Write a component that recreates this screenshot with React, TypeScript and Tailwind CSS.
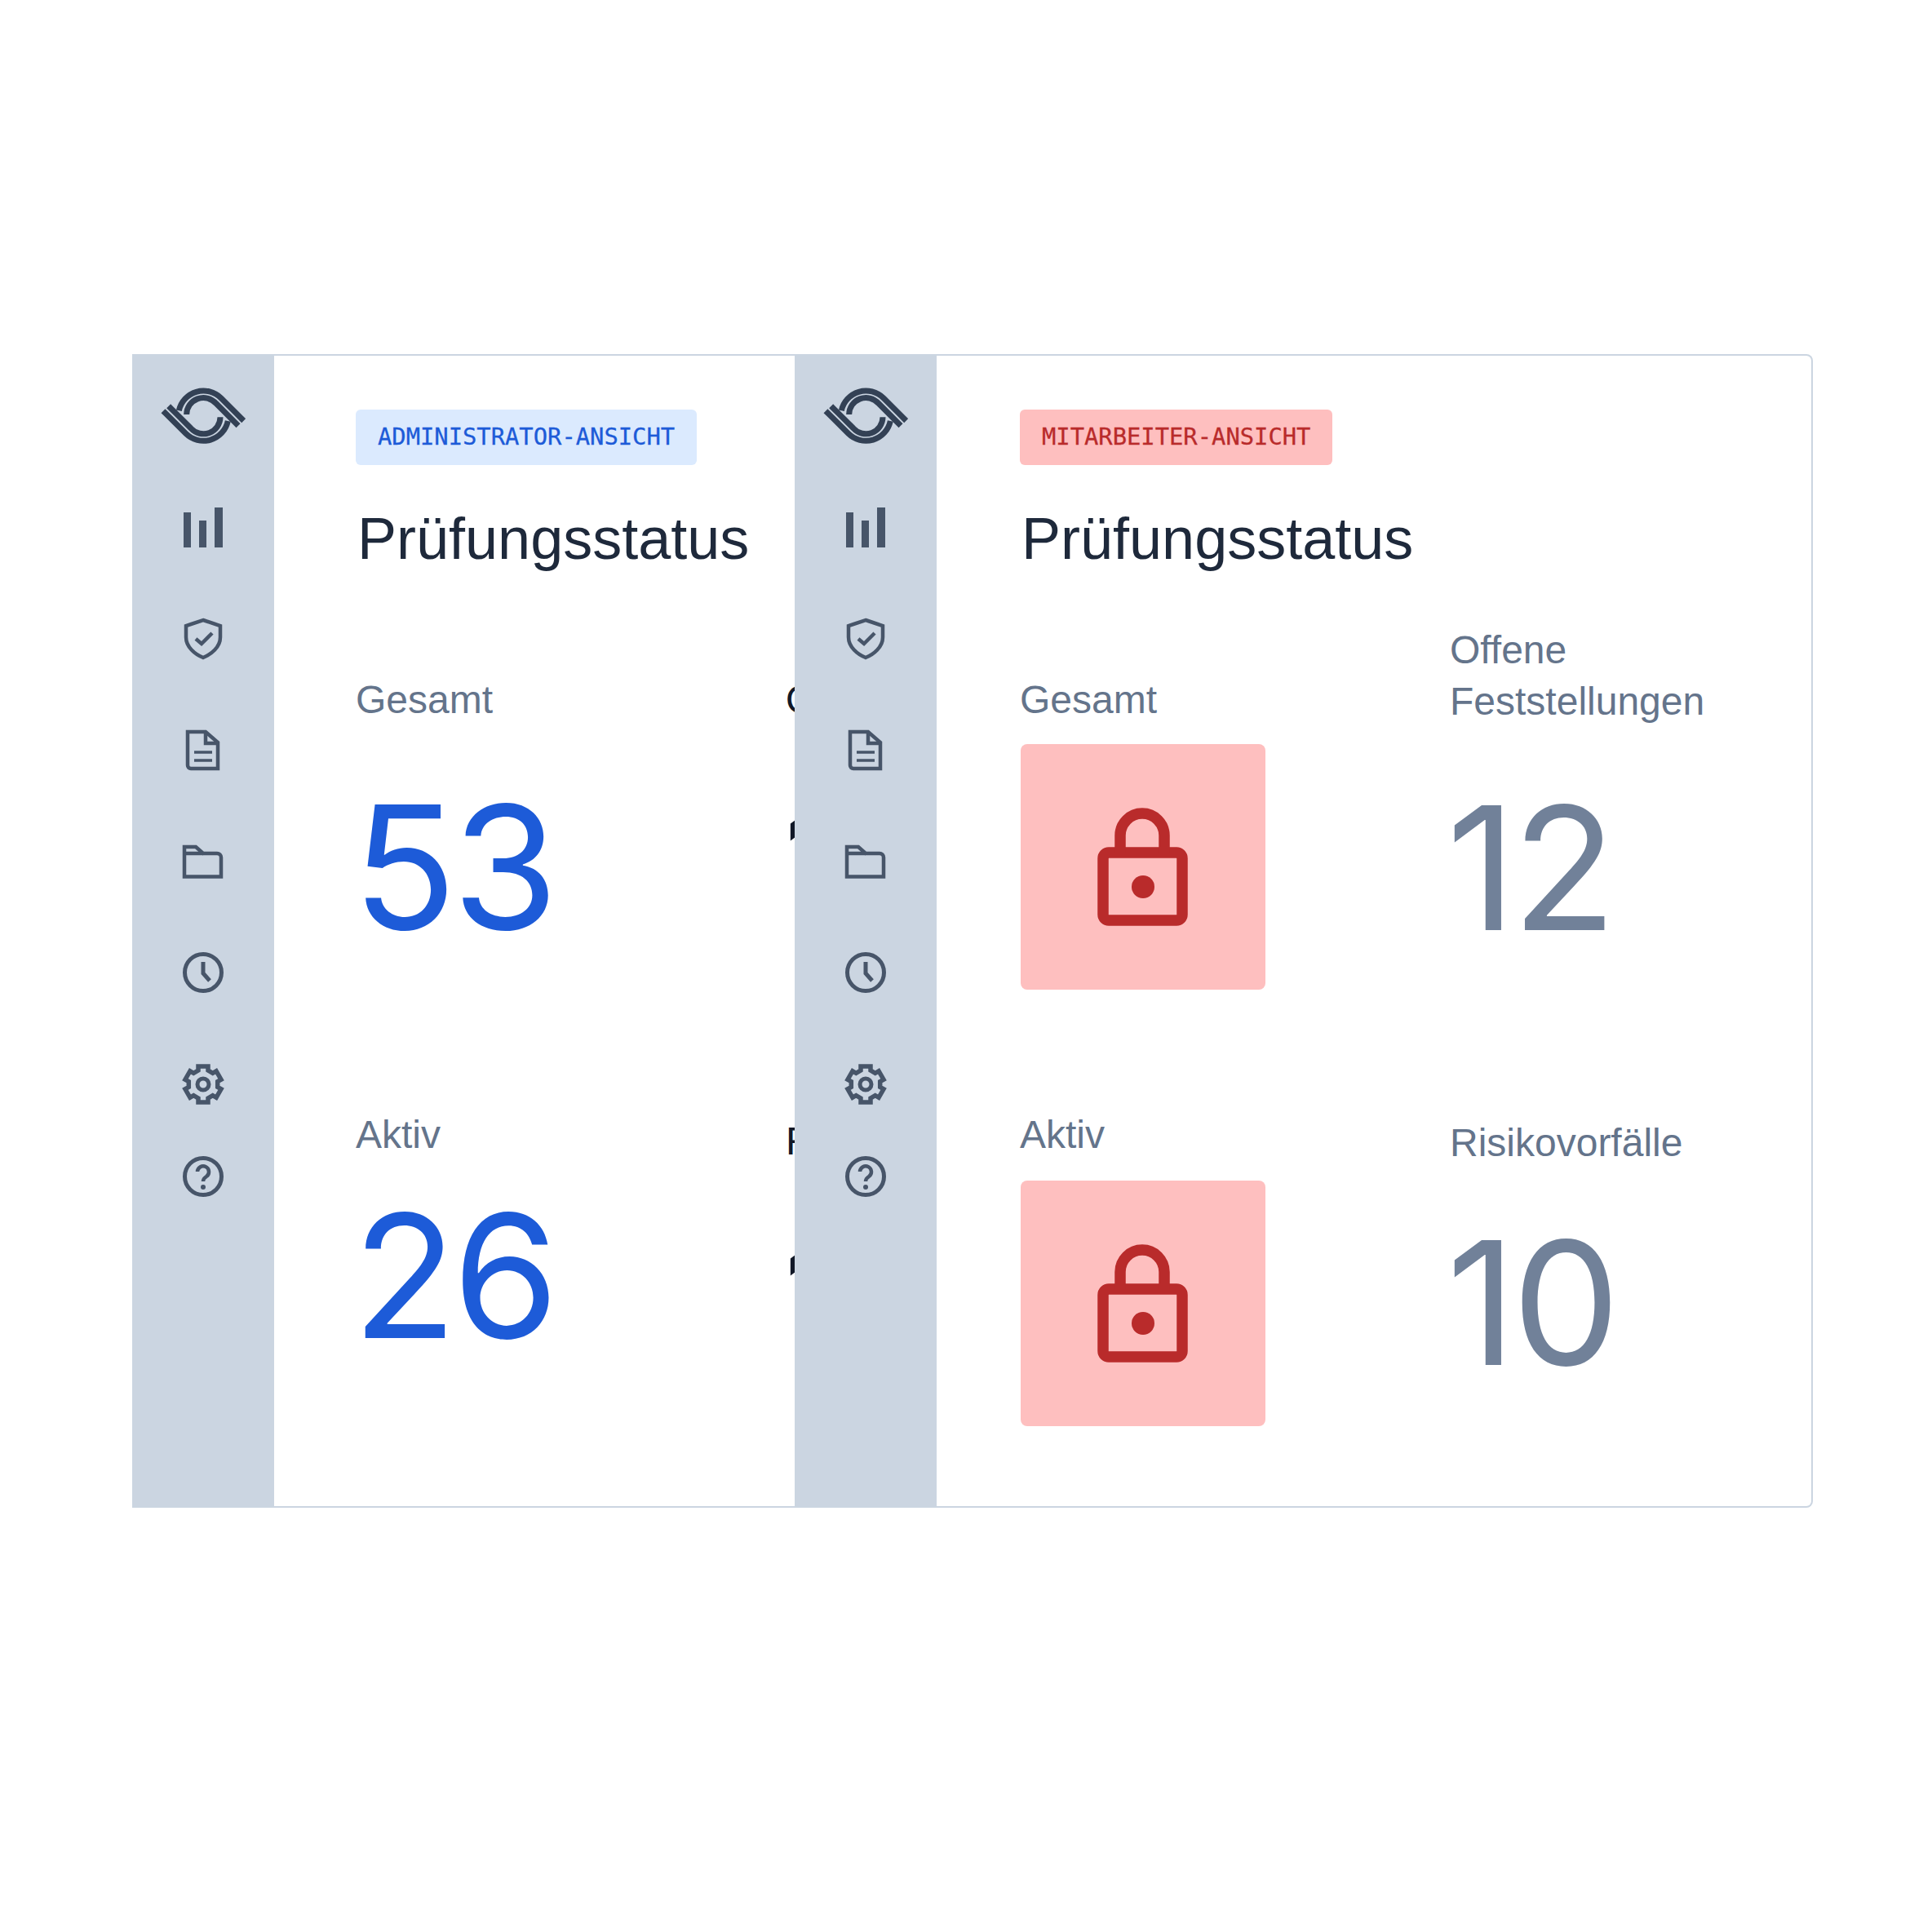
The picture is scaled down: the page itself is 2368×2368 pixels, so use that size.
const sans = "font-['Liberation_Sans',Arial,sans-serif]";

const gearPoints =
  "24,8 36,8 36,13 41.7,16.3 46.05,13.8 52.05,24.2 47.7,26.7 47.7,33.3 52.05,35.8 46.05,46.2 41.7,43.7 36,47 36,52 24,52 24,47 18.3,43.7 13.95,46.2 7.95,35.8 12.3,33.3 12.3,26.7 7.95,24.2 13.95,13.8 18.3,16.3 24,13";

function Logo() {
  return (
    <svg width="104" height="69" viewBox="0 0 312 207" fill="none" stroke="#334155" strokeWidth="21">
      <path d="M67 85A92 92 0 0 1 222 39L305 122" />
      <path d="M95 99A62 62 0 0 1 203 58L285 140" />
      <path d="M247 123A92 92 0 0 1 92 169L9 86" />
      <path d="M219 109A62 62 0 0 1 111 150L29 68" />
    </svg>
  );
}

function NavIcon({ children, className = "" }: { children: React.ReactNode; className?: string }) {
  return (
    <svg className={className} width="60" height="60" viewBox="0 0 60 60" fill="none" stroke="#475569" strokeWidth="4.5">
      {children}
    </svg>
  );
}

function Sidebar() {
  return (
    <div className="w-[174px] shrink-0 bg-[#cbd5e1] flex flex-col items-center pt-[41px]">
      <Logo />
      <div className="flex flex-col items-center gap-[76px] mt-[73px]">
        <NavIcon>
          <path fill="#475569" stroke="none" d="M6 11H15V54H6ZM25 21H34V54H25ZM44 5H54V54H44Z" />
        </NavIcon>
        <NavIcon>
          <path d="M30 7L51 14V28C51 40 40 49 30 53C20 49 9 40 9 28V14Z" />
          <path d="M21 30L28 36L41 23" />
        </NavIcon>
        <NavIcon className="mt-px">
          <path d="M11 7H33L48 20V52H15A4 4 0 0 1 11 48Z" />
          <path d="M33 7V21H48" />
          <path strokeWidth="3.5" d="M19 32H41M19 42H41" />
        </NavIcon>
        <NavIcon className="mt-px">
          <path d="M7 11H21L30 19H47A5 5 0 0 1 52 24V47.5H7Z" />
          <path d="M7 19H30" />
        </NavIcon>
        <NavIcon className="-mt-px">
          <circle cx="30" cy="30" r="22.5" strokeWidth="5" />
          <path strokeWidth="5" d="M30 17V31L38 40" />
        </NavIcon>
        <NavIcon className="mt-px">
          <polygon strokeWidth="5.5" points={gearPoints} />
          <circle cx="30" cy="30" r="7" strokeWidth="5" />
        </NavIcon>
        <div className="-mt-[23px]">
          <NavIcon>
            <circle cx="30" cy="30" r="22.5" strokeWidth="5" />
            <path d="M23 24A7 7 0 1 1 34 30C31 32 30 33 30 36" />
            <circle cx="30" cy="43" r="3" fill="#475569" stroke="none" />
          </NavIcon>
        </div>
      </div>
    </div>
  );
}

function LockTile() {
  return (
    <div className="w-[300px] h-[301px] ml-px rounded-lg bg-[#febfbf] flex items-center justify-center">
      <svg width="180" height="180" viewBox="0 0 180 180" fill="none" stroke="#b92b2b" strokeWidth="13.5">
        <rect x="41" y="72" width="97" height="83" rx="7" />
        <path d="M62 72V51A27 27 0 0 1 116 51V72" />
        <circle cx="90" cy="114" r="14" fill="#b92b2b" stroke="none" />
      </svg>
    </div>
  );
}

function Label({ children, className = "" }: { children: React.ReactNode; className?: string }) {
  return <p className={`text-[48px] leading-[63px] ${className}`}>{children}</p>;
}

function Value({ children, className }: { children: React.ReactNode; className: string }) {
  return <p className={`-ml-[4px] text-[210px] leading-[216px] font-['Inter',sans-serif] tracking-[-0.025em] ${className}`}>{children}</p>;
}

function Badge({ children, className }: { children: React.ReactNode; className: string }) {
  return (
    <span className={`inline-flex items-center h-[68px] px-[27px] rounded-md text-[28.8px] font-['DejaVu_Sans_Mono',monospace] [-webkit-text-stroke:0.3px] ${className}`}>
      {children}
    </span>
  );
}

function Title() {
  return <h2 className="mt-[42px] pl-[2px] text-[72px] leading-[96px] text-[#1e293b]">Prüfungsstatus</h2>;
}

export default function App() {
  return (
    <div className={`w-[2368px] h-[2368px] bg-white pt-[434px] pl-[162px] ${sans}`}>
      <div className="flex w-[2060px] h-[1414px]">
        {/* Admin view, second column runs under the next panel */}
        <div className="w-[812px] shrink-0 flex overflow-hidden">
          <Sidebar />
          <div className="flex-1 border-y-2 border-[#cbd5e1] pl-[100px] pt-[66px]">
            <Badge className="bg-[#dbeafe] text-[#1d5bd8]">ADMINISTRATOR-ANSICHT</Badge>
            <Title />
            <div className="flex mt-[118px]">
              <div className="w-[527px] shrink-0">
                <Label className="text-[#64748b] whitespace-nowrap">Gesamt</Label>
                <Value className="mt-[66px] text-[#1d5bd8]">53</Value>
                <Label className="mt-[188px] text-[#64748b]">Aktiv</Label>
                <Value className="mt-[34px] text-[#1d5bd8]">26</Value>
              </div>
              <div className="shrink-0 text-[#111827] whitespace-nowrap">
                <Label>Offene Feststellungen</Label>
                <Value className="mt-[65px]">12</Value>
                <Label className="mt-[197px]">Risikovorfälle</Label>
                <Value className="mt-[57px]">10</Value>
              </div>
            </div>
          </div>
        </div>

        {/* Employee view */}
        <div className="flex-1 flex">
          <Sidebar />
          <div className="flex-1 border-y-2 border-r-2 border-[#cbd5e1] rounded-r-lg pl-[102px] pt-[66px]">
            <Badge className="bg-[#febfbf] text-[#b92b2b]">MITARBEITER-ANSICHT</Badge>
            <Title />
            <div className="flex mt-[57px]">
              <div className="w-[527px] shrink-0 pt-[61px]">
                <Label className="text-[#64748b]">Gesamt</Label>
                <div className="mt-[23px]"><LockTile /></div>
                <Label className="mt-[146px] text-[#64748b]">Aktiv</Label>
                <div className="mt-[25px]"><LockTile /></div>
              </div>
              <div className="shrink-0">
                <Label className="text-[#64748b]">Offene<br />Feststellungen</Label>
                <Value className="mt-[65px] text-[#718199]">12</Value>
                <Label className="mt-[197px] text-[#64748b]">Risikovorfälle</Label>
                <Value className="mt-[57px] text-[#718199]">10</Value>
              </div>
            </div>
          </div>
        </div>
      </div>
    </div>
  );
}
